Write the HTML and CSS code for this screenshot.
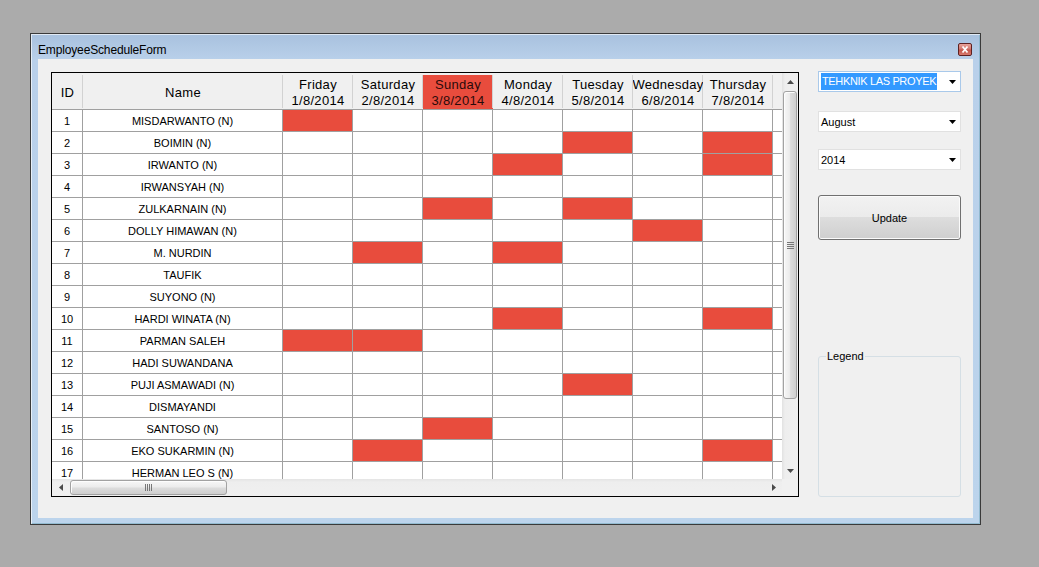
FILE: index.html
```html
<!DOCTYPE html>
<html>
<head>
<meta charset="utf-8">
<title>EmployeeScheduleForm</title>
<link rel="stylesheet" href="styles.css">
</head>
<body>
<div class="window">
  <div class="titlebar">
    <span class="title">EmployeeScheduleForm</span>
    <span class="close">
      <svg width="14" height="13" viewBox="0 0 14 13"><path d="M4.5 3.5 L9.5 9.5 M9.5 3.5 L4.5 9.5" stroke="#fff" stroke-width="1.8" fill="none"/></svg>
    </span>
  </div>
  <div class="client">
    <div class="gridframe">
      <div class="viewport">
        <div class="table">
          <div class="h"><span>ID</span></div>
          <div class="h"><span>Name</span></div>
          <div class="h"><span>Friday</span><span>1/8/2014</span></div>
          <div class="h"><span>Saturday</span><span>2/8/2014</span></div>
          <div class="h sun"><span>Sunday</span><span>3/8/2014</span></div>
          <div class="h"><span>Monday</span><span>4/8/2014</span></div>
          <div class="h"><span>Tuesday</span><span>5/8/2014</span></div>
          <div class="h"><span>Wednesday</span><span>6/8/2014</span></div>
          <div class="h"><span>Thursday</span><span>7/8/2014</span></div>
          <div class="h hf"></div>

          <div class="c">1</div><div class="c">MISDARWANTO (N)</div><div class="c r"></div><div class="c"></div><div class="c"></div><div class="c"></div><div class="c"></div><div class="c"></div><div class="c"></div><div class="f"></div>
          <div class="c">2</div><div class="c">BOIMIN (N)</div><div class="c"></div><div class="c"></div><div class="c"></div><div class="c"></div><div class="c r"></div><div class="c"></div><div class="c r"></div><div class="f"></div>
          <div class="c">3</div><div class="c">IRWANTO (N)</div><div class="c"></div><div class="c"></div><div class="c"></div><div class="c r"></div><div class="c"></div><div class="c"></div><div class="c r"></div><div class="f"></div>
          <div class="c">4</div><div class="c">IRWANSYAH (N)</div><div class="c"></div><div class="c"></div><div class="c"></div><div class="c"></div><div class="c"></div><div class="c"></div><div class="c"></div><div class="f"></div>
          <div class="c">5</div><div class="c">ZULKARNAIN (N)</div><div class="c"></div><div class="c"></div><div class="c r"></div><div class="c"></div><div class="c r"></div><div class="c"></div><div class="c"></div><div class="f"></div>
          <div class="c">6</div><div class="c">DOLLY HIMAWAN (N)</div><div class="c"></div><div class="c"></div><div class="c"></div><div class="c"></div><div class="c"></div><div class="c r"></div><div class="c"></div><div class="f"></div>
          <div class="c">7</div><div class="c">M. NURDIN</div><div class="c"></div><div class="c r"></div><div class="c"></div><div class="c r"></div><div class="c"></div><div class="c"></div><div class="c"></div><div class="f"></div>
          <div class="c">8</div><div class="c">TAUFIK</div><div class="c"></div><div class="c"></div><div class="c"></div><div class="c"></div><div class="c"></div><div class="c"></div><div class="c"></div><div class="f"></div>
          <div class="c">9</div><div class="c">SUYONO (N)</div><div class="c"></div><div class="c"></div><div class="c"></div><div class="c"></div><div class="c"></div><div class="c"></div><div class="c"></div><div class="f"></div>
          <div class="c">10</div><div class="c">HARDI WINATA (N)</div><div class="c"></div><div class="c"></div><div class="c"></div><div class="c r"></div><div class="c"></div><div class="c"></div><div class="c r"></div><div class="f"></div>
          <div class="c">11</div><div class="c">PARMAN SALEH</div><div class="c r"></div><div class="c r"></div><div class="c"></div><div class="c"></div><div class="c"></div><div class="c"></div><div class="c"></div><div class="f"></div>
          <div class="c">12</div><div class="c">HADI SUWANDANA</div><div class="c"></div><div class="c"></div><div class="c"></div><div class="c"></div><div class="c"></div><div class="c"></div><div class="c"></div><div class="f"></div>
          <div class="c">13</div><div class="c">PUJI ASMAWADI (N)</div><div class="c"></div><div class="c"></div><div class="c"></div><div class="c"></div><div class="c r"></div><div class="c"></div><div class="c"></div><div class="f"></div>
          <div class="c">14</div><div class="c">DISMAYANDI</div><div class="c"></div><div class="c"></div><div class="c"></div><div class="c"></div><div class="c"></div><div class="c"></div><div class="c"></div><div class="f"></div>
          <div class="c">15</div><div class="c">SANTOSO (N)</div><div class="c"></div><div class="c"></div><div class="c r"></div><div class="c"></div><div class="c"></div><div class="c"></div><div class="c"></div><div class="f"></div>
          <div class="c">16</div><div class="c">EKO SUKARMIN (N)</div><div class="c"></div><div class="c r"></div><div class="c"></div><div class="c"></div><div class="c"></div><div class="c"></div><div class="c r"></div><div class="f"></div>
          <div class="c">17</div><div class="c">HERMAN LEO S (N)</div><div class="c"></div><div class="c"></div><div class="c"></div><div class="c"></div><div class="c"></div><div class="c"></div><div class="c"></div><div class="f"></div>
        </div>
      </div>
      <div class="vscroll">
        <div class="arrow"><svg width="7" height="4" viewBox="0 0 7 4"><polygon points="0,4 3.5,0 7,4" fill="#4a4a4a"/></svg></div>
        <div class="vthumb">
          <svg width="7" height="7" viewBox="0 0 7 7"><path d="M0 0.5H7M0 2.5H7M0 4.5H7M0 6.5H7" stroke="#777" stroke-width="1"/></svg>
        </div>
        <div class="spacer"></div>
        <div class="arrow"><svg width="7" height="4" viewBox="0 0 7 4"><polygon points="0,0 7,0 3.5,4" fill="#4a4a4a"/></svg></div>
      </div>
      <div class="hscroll">
        <div class="harrow"><svg width="4" height="7" viewBox="0 0 4 7"><polygon points="4,0 4,7 0,3.5" fill="#4a4a4a"/></svg></div>
        <div class="hthumb">
          <svg width="7" height="7" viewBox="0 0 7 7"><path d="M0.5 0V7M2.5 0V7M4.5 0V7M6.5 0V7" stroke="#777" stroke-width="1"/></svg>
        </div>
        <div class="spacer"></div>
        <div class="harrow"><svg width="4" height="7" viewBox="0 0 4 7"><polygon points="0,0 4,3.5 0,7" fill="#4a4a4a"/></svg></div>
      </div>
      <div class="corner"></div>
    </div>

    <div class="panel">
      <div class="combo focus"><span class="sel">TEHKNIK LAS PROYEK</span><svg class="dd" width="7" height="4" viewBox="0 0 7 4"><polygon points="0,0 7,0 3.5,4" fill="#000"/></svg></div>
      <div class="combo m2"><span class="txt">August</span><svg class="dd" width="7" height="4" viewBox="0 0 7 4"><polygon points="0,0 7,0 3.5,4" fill="#000"/></svg></div>
      <div class="combo m3"><span class="txt">2014</span><svg class="dd" width="7" height="4" viewBox="0 0 7 4"><polygon points="0,0 7,0 3.5,4" fill="#000"/></svg></div>
      <div class="button">Update</div>
      <div class="group"><span class="glabel">Legend</span></div>
    </div>
  </div>
</div>
</body>
</html>
```
FILE: styles.css
```css
* { box-sizing: border-box; }

body {
  margin: 0;
  width: 1039px;
  height: 567px;
  overflow: hidden;
  background: #ababab;
  font-family: "Liberation Sans", Arial, sans-serif;
  color: #000;
}

.window {
  margin: 33px 0 0 30px;
  width: 951px;
  height: 492px;
  border: 1px solid #3a3a3a;
  background: linear-gradient(180deg, #a8c1de 0, #b9d0ea 26px, #bcd4ec 100%);
  box-shadow: inset 1px 1px 0 rgba(255,255,255,0.65), inset -1px -1px 0 rgba(120,170,190,0.6);
  padding: 0 7px 6px 7px;
  display: flex;
  flex-direction: column;
}

.titlebar {
  height: 25px;
  display: flex;
  align-items: flex-start;
  flex: none;
}

.title {
  padding-top: 6px;
  line-height: 21px;
  font-size: 12px;
  letter-spacing: -0.15px;
  color: #000;
}

.close {
  margin-left: auto;
  margin-right: 1px;
  margin-top: 9px;
  width: 14px;
  height: 13px;
  border: 1px solid #5e2121;
  border-radius: 2px;
  background: linear-gradient(180deg, #e8a39b 0%, #d3786f 45%, #c4554b 55%, #d77a6f 100%);
  display: flex;
}
.close svg { margin: -1px; }

.client {
  flex: 1;
  background: #f0f0f0;
  display: flex;
  align-items: flex-start;
  gap: 19px;
  padding: 12px 12px 0 13px;
}

/* grid */
.gridframe {
  margin-top: 1px;
  width: 748px;
  height: 425px;
  border: 1px solid #000;
  background: #fff;
  display: grid;
  grid-template-columns: 730px 16px;
  grid-template-rows: 406px 17px;
  flex: none;
}

.viewport {
  overflow: hidden;
  background: #fff;
}

.table {
  display: grid;
  grid-template-columns: 31px 200px repeat(7, 70px) 9px;
  grid-template-rows: 37px;
  grid-auto-rows: 22px;
}

.h {
  display: flex;
  flex-direction: column;
  align-items: center;
  justify-content: center;
  overflow: hidden;
  white-space: nowrap;
  padding-top: 4px;
  font-size: 13px;
  line-height: 16px;
  letter-spacing: 0.3px;
  color: #000;
  border-bottom: 1px solid #a0a0a0;
  background:
    linear-gradient(#d2d2d2, #d2d2d2) no-repeat right 0 top 2px / 1px 33px,
    #f0f0f0;
}
.h span { flex: none; }
.h.sun {
  color: #2a0a0a;
  background:
    linear-gradient(#d2d2d2, #d2d2d2) no-repeat right 0 top 2px / 1px 33px,
    linear-gradient(#f0f0f0, #f0f0f0) no-repeat left top / 100% 2px,
    #e84c3d;
}
.h.hf { background: #f0f0f0; }

.c {
  border-right: 1px solid #a0a0a0;
  border-bottom: 1px solid #a0a0a0;
  background: #fff;
  display: flex;
  align-items: center;
  justify-content: center;
  font-size: 11px;
  white-space: nowrap;
  color: #000;
}
.c.r { background: #e84c3d; }
.f {
  border-bottom: 1px solid #a0a0a0;
  background: #fff;
}

/* scrollbars */
.vscroll {
  grid-column: 2;
  grid-row: 1;
  display: flex;
  flex-direction: column;
  align-items: center;
  background: linear-gradient(90deg, #e2e2e2 0, #eeeeee 3px, #f0f0f0 100%);
}
.arrow {
  width: 16px;
  height: 17px;
  flex: none;
  display: flex;
  align-items: center;
  justify-content: center;
}
.vthumb {
  margin-top: 1px;
  width: 14px;
  height: 308px;
  flex: none;
  border: 1px solid #a2a2a2;
  border-radius: 3px;
  background: linear-gradient(90deg, #f7f7f7 0%, #ececec 45%, #dcdcdc 55%, #cfcfcf 100%);
  box-shadow: inset 1px 1px 0 #fdfdfd;
  display: flex;
  align-items: center;
  justify-content: center;
}
.spacer { flex: 1; }

.hscroll {
  grid-column: 1;
  grid-row: 2;
  display: flex;
  align-items: center;
  background: linear-gradient(180deg, #e4e4e4 0, #eeeeee 3px, #f0f0f0 100%);
}
.harrow {
  width: 17px;
  height: 17px;
  flex: none;
  display: flex;
  align-items: center;
  justify-content: center;
}
.hthumb {
  margin-left: 1px;
  width: 157px;
  height: 15px;
  flex: none;
  border: 1px solid #a2a2a2;
  border-radius: 3px;
  background: linear-gradient(180deg, #f7f7f7 0%, #ececec 45%, #dcdcdc 55%, #cfcfcf 100%);
  box-shadow: inset 1px 1px 0 #fdfdfd;
  display: flex;
  align-items: center;
  justify-content: center;
}
.corner {
  grid-column: 2;
  grid-row: 2;
  background: #f0f0f0;
}

/* right panel */
.panel {
  width: 143px;
  display: flex;
  flex-direction: column;
  flex: none;
}

.combo {
  height: 21px;
  background: #fff;
  border: 1px solid #e1e1e1;
  display: flex;
  align-items: center;
  padding-left: 2px;
  font-size: 11px;
}
.combo.focus { border-color: #a9c9ea; }
.combo.m2 { margin-top: 19px; }
.combo.m3 { margin-top: 17px; }
.combo .sel {
  background: #3399ff;
  color: #fff;
  line-height: 17px;
  padding: 0 1px;
  letter-spacing: -0.35px;
  white-space: nowrap;
}
.combo .txt { color: #000; }
.combo .dd { margin-left: auto; margin-right: 4px; flex: none; }

.button {
  margin-top: 25px;
  height: 45px;
  border: 1px solid #707070;
  border-radius: 3px;
  background: linear-gradient(180deg, #f2f2f2 0%, #ebebeb 49%, #dddddd 50%, #cfcfcf 100%);
  box-shadow: inset 0 0 0 1px #fbfbfb;
  display: flex;
  align-items: center;
  justify-content: center;
  font-size: 11px;
  color: #000;
}

.group {
  margin-top: 116px;
  height: 141px;
  border: 1px solid #d5dfe5;
  border-radius: 3px;
  position: relative;
}
.glabel {
  position: absolute;
  top: -7px;
  left: 7px;
  padding: 0 1px;
  background: #f0f0f0;
  font-size: 11px;
  line-height: 13px;
  color: #000;
}
```
